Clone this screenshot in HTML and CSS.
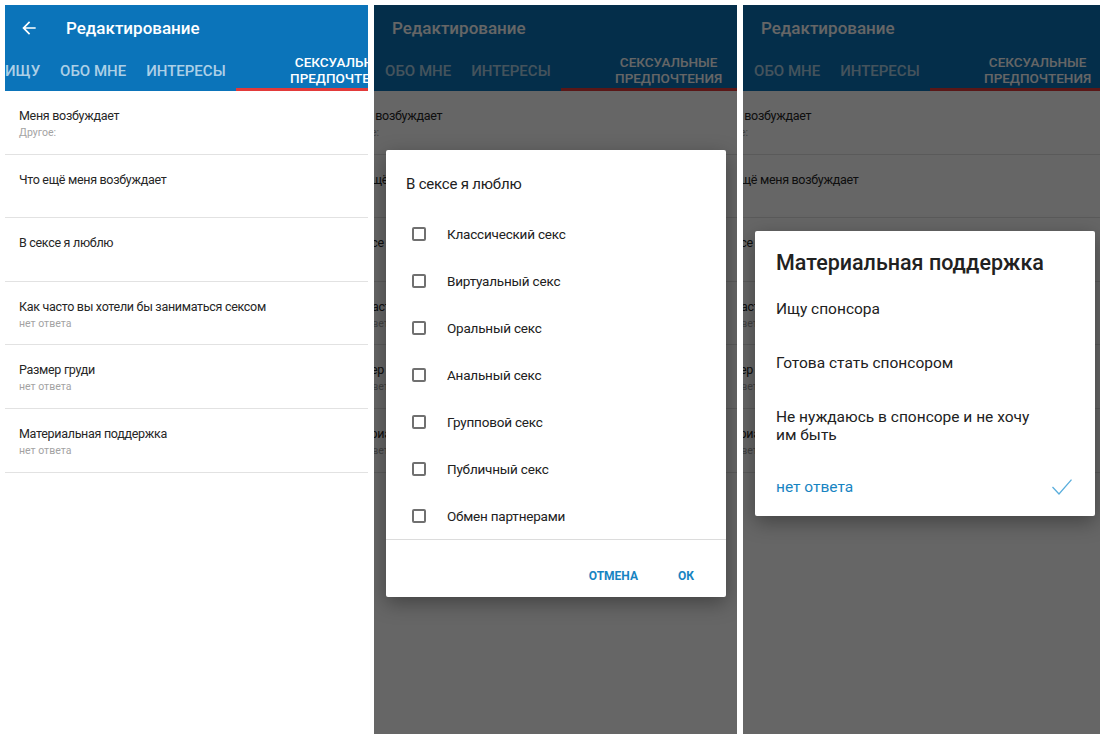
FILE: index.html
```html
<!DOCTYPE html>
<html lang="ru">
<head>
  <meta charset="UTF-8">
  <title>Редактирование</title>
  <link rel="stylesheet" href="styles.css">
</head>
<body>

  <div class="screens">

    <!-- screen 1: profile fields -->
    <section class="phone">
      <header class="appbar">
        <div class="toolbar">
          <svg class="back" viewBox="0 0 24 24"><path d="M20 11H7.83l5.59-5.59L12 4l-8 8 8 8 1.41-1.41L7.83 13H20v-2z" fill="#fff"/></svg>
          <span class="title">Редактирование</span>
        </div>
        <nav class="tabs">
          <div class="tab-strip">
            <span class="tab">ИЩУ</span>
            <span class="tab">ОБО МНЕ</span>
            <span class="tab">ИНТЕРЕСЫ</span>
            <span class="tab active">СЕКСУАЛЬНЫЕ<br>ПРЕДПОЧТЕНИЯ</span>
          </div>
        </nav>
      </header>
      <ul class="fields">
        <li class="field"><div class="field-name">Меня возбуждает</div><div class="field-value">Другое:</div></li>
        <li class="field"><div class="field-name">Что ещё меня возбуждает</div></li>
        <li class="field"><div class="field-name">В сексе я люблю</div></li>
        <li class="field"><div class="field-name">Как часто вы хотели бы заниматься сексом</div><div class="field-value">нет ответа</div></li>
        <li class="field"><div class="field-name">Размер груди</div><div class="field-value">нет ответа</div></li>
        <li class="field"><div class="field-name">Материальная поддержка</div><div class="field-value">нет ответа</div></li>
      </ul>
    </section>

    <!-- screen 2: multi choice dialog -->
    <section class="phone">
      <header class="appbar">
        <div class="toolbar plain">
          <span class="title">Редактирование</span>
        </div>
        <nav class="tabs">
          <div class="tab-strip scrolled">
            <span class="tab">ИЩУ</span>
            <span class="tab">ОБО МНЕ</span>
            <span class="tab">ИНТЕРЕСЫ</span>
            <span class="tab active">СЕКСУАЛЬНЫЕ<br>ПРЕДПОЧТЕНИЯ</span>
          </div>
        </nav>
      </header>
      <ul class="fields shifted">
        <li class="field"><div class="field-name">Меня возбуждает</div><div class="field-value">Другое:</div></li>
        <li class="field"><div class="field-name">Что ещё меня возбуждает</div></li>
        <li class="field"><div class="field-name">В сексе я люблю</div></li>
        <li class="field"><div class="field-name">Как часто вы хотели бы заниматься сексом</div><div class="field-value">нет ответа</div></li>
        <li class="field"><div class="field-name">Размер груди</div><div class="field-value">нет ответа</div></li>
        <li class="field"><div class="field-name">Материальная поддержка</div><div class="field-value">нет ответа</div></li>
      </ul>

      <div class="scrim">
        <div class="dialog">
          <div class="dialog-title">В сексе я люблю</div>
          <ul class="check-list">
            <li class="check-item"><span class="box"></span>Классический секс</li>
            <li class="check-item"><span class="box"></span>Виртуальный секс</li>
            <li class="check-item"><span class="box"></span>Оральный секс</li>
            <li class="check-item"><span class="box"></span>Анальный секс</li>
            <li class="check-item"><span class="box"></span>Групповой секс</li>
            <li class="check-item"><span class="box"></span>Публичный секс</li>
            <li class="check-item"><span class="box"></span>Обмен партнерами</li>
          </ul>
          <div class="dialog-actions">
            <button class="btn">ОТМЕНА</button>
            <button class="btn">ОК</button>
          </div>
        </div>
      </div>
    </section>

    <!-- screen 3: single choice dialog -->
    <section class="phone">
      <header class="appbar">
        <div class="toolbar plain">
          <span class="title">Редактирование</span>
        </div>
        <nav class="tabs">
          <div class="tab-strip scrolled">
            <span class="tab">ИЩУ</span>
            <span class="tab">ОБО МНЕ</span>
            <span class="tab">ИНТЕРЕСЫ</span>
            <span class="tab active">СЕКСУАЛЬНЫЕ<br>ПРЕДПОЧТЕНИЯ</span>
          </div>
        </nav>
      </header>
      <ul class="fields shifted">
        <li class="field"><div class="field-name">Меня возбуждает</div><div class="field-value">Другое:</div></li>
        <li class="field"><div class="field-name">Что ещё меня возбуждает</div></li>
        <li class="field"><div class="field-name">В сексе я люблю</div></li>
        <li class="field"><div class="field-name">Как часто вы хотели бы заниматься сексом</div><div class="field-value">нет ответа</div></li>
        <li class="field"><div class="field-name">Размер груди</div><div class="field-value">нет ответа</div></li>
        <li class="field"><div class="field-name">Материальная поддержка</div><div class="field-value">нет ответа</div></li>
      </ul>

      <div class="scrim">
        <div class="dialog">
          <div class="choice-title">Материальная поддержка</div>
          <div class="choice"><span class="choice-text">Ищу спонсора</span></div>
          <div class="choice"><span class="choice-text">Готова стать спонсором</span></div>
          <div class="choice"><span class="choice-text">Не нуждаюсь в спонсоре и не хочу им быть</span></div>
          <div class="choice selected">
            <span class="choice-text">нет ответа</span>
            <svg class="tick" viewBox="0 0 20 16"><polyline points="0.5,8 7,15 19.5,0.6" fill="none" stroke="#5aaedc" stroke-width="1.3"/></svg>
          </div>
        </div>
      </div>
    </section>

  </div>

</body>
</html>
```

FILE: styles.css
```css
* {
  box-sizing: border-box;
}
body {
  margin: 0;
  background: #fff;
  font-family: Roboto, "Noto Sans", sans-serif;
  color: #212121;
  overflow: hidden;
}
.screens {
  display: flex;
  gap: 6px;
  width: 1100px;
  height: 734px;
  padding: 5px 0 0 5px;
  overflow: hidden;
}
.phone {
  position: relative;
  flex: 0 0 363px;
  height: 729px;
  background: #fff;
  overflow: hidden;
}

/* app bar */
.appbar {
  background: #0b74ba;
  color: #fff;
}
.toolbar {
  height: 46px;
  display: flex;
  align-items: center;
  padding-left: 14px;
}
.toolbar.plain {
  padding-left: 18px;
}
.back {
  width: 20px;
  height: 20px;
  margin-right: 27px;
}
.title {
  font-size: 17px;
  font-weight: 500;
}
.tabs {
  height: 40px;
  overflow: hidden;
}
.tab-strip {
  display: flex;
  height: 40px;
  margin-left: -10px;
}
.tab-strip.scrolled {
  margin-left: -54px;
}
.tab {
  flex: none;
  display: flex;
  align-items: center;
  padding: 0 10px;
  font-size: 15px;
  font-weight: 500;
  color: rgba(255, 255, 255, 0.68);
  white-space: nowrap;
}
.tab.active {
  width: 222px;
  justify-content: center;
  text-align: center;
  padding: 1px 6px 0 0;
  font-size: 13.5px;
  line-height: 16px;
  color: #fff;
  border-bottom: 3px solid #e23a3a;
}

/* field list */
.fields {
  list-style: none;
  margin: 0;
  padding: 0;
}
.field {
  height: 63.6px;
  padding: 16px 14px 0;
  border-bottom: 1px solid #e2e2e2;
}
.field-name {
  font-size: 12.5px;
  line-height: 18px;
  letter-spacing: -0.3px;
  color: #262626;
  white-space: nowrap;
}
.field-value {
  font-size: 10.5px;
  line-height: 16px;
  color: #a3a3a3;
}
.shifted .field-name,
.shifted .field-value {
  margin-left: -46px;
}

/* dialogs */
.scrim {
  position: absolute;
  top: 0;
  left: 0;
  right: 0;
  bottom: 0;
  background: rgba(0, 0, 0, 0.6);
  display: flex;
  align-items: center;
  padding: 8px 11px 0 12px;
}
.dialog {
  width: 100%;
  background: #fff;
  border-radius: 2px;
  box-shadow: 0 6px 20px rgba(0, 0, 0, 0.35);
}
.dialog-title {
  padding: 24px 20px 16px;
  font-size: 15px;
  line-height: 20px;
  letter-spacing: -0.2px;
}
.check-list {
  list-style: none;
  margin: 0;
  padding: 0;
  border-bottom: 1px solid #dcdcdc;
}
.check-item {
  height: 47px;
  display: flex;
  align-items: center;
  padding-left: 26px;
  font-size: 13.5px;
  letter-spacing: -0.2px;
}
.box {
  width: 14px;
  height: 14px;
  border: 2px solid #707070;
  border-radius: 2px;
  margin-right: 21px;
}
.dialog-actions {
  display: flex;
  justify-content: flex-end;
  gap: 16px;
  height: 57px;
  padding: 18px 20px 3px 0;
}
.btn {
  background: none;
  border: none;
  padding: 0 12px;
  font-family: inherit;
  font-size: 12px;
  font-weight: 700;
  line-height: 36px;
  color: #1784c2;
}
.choice-title {
  padding: 20px 21px 7px;
  font-size: 21.5px;
  line-height: 24px;
  font-weight: 500;
}
.choice {
  display: flex;
  align-items: center;
  justify-content: space-between;
  padding: 18px 23px 18px 21px;
  font-size: 15.5px;
  line-height: 18px;
}
.choice:last-child {
  padding-top: 16px;
  padding-bottom: 20px;
}
.choice-text {
  max-width: 262px;
}
.choice.selected {
  color: #1784c2;
}
.tick {
  width: 20px;
  height: 16px;
}
```
